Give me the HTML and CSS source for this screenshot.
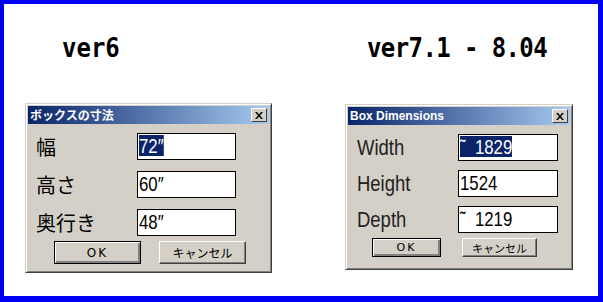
FILE: index.html
```html
<!DOCTYPE html>
<html>
<head>
    <meta charset="UTF-8">
    <title>Box Dimensions</title>
    <link rel="stylesheet" href="styles.css">
</head>
<body>
    <div class="frame">
        <div class="pane pane-old">
            <div class="version">ver6</div>
            <div class="dialog dialog-old">
                <div class="titlebar">
                    <span class="title jp">ボックスの寸法</span>
                    <span class="close-btn">
                        <svg width="8" height="7" viewBox="0 0 8 7"><path d="M0 0h2l2 2.5L6 0h2L5 3.5 8 7H6L4 4.5 2 7H0l3-3.5z" fill="#000"/></svg>
                    </span>
                </div>
                <div class="dialog-body">
                    <label class="field-label jp">幅</label>
                    <div class="field"><span class="narrow selected">72″</span></div>
                    <label class="field-label jp">高さ</label>
                    <div class="field"><span class="narrow">60″</span></div>
                    <label class="field-label jp">奥行き</label>
                    <div class="field"><span class="narrow">48″</span></div>
                    <div class="buttons">
                        <div class="btn btn-default">OK</div>
                        <div class="btn jp">キャンセル</div>
                    </div>
                </div>
            </div>
        </div>

        <div class="pane pane-new">
            <div class="version">ver7.1 - 8.04</div>
            <div class="dialog dialog-new">
                <div class="titlebar">
                    <span class="title">Box Dimensions</span>
                    <span class="close-btn">
                        <svg width="8" height="7" viewBox="0 0 8 7"><path d="M0 0h2l2 2.5L6 0h2L5 3.5 8 7H6L4 4.5 2 7H0l3-3.5z" fill="#000"/></svg>
                    </span>
                </div>
                <div class="dialog-body">
                    <label class="field-label"><span class="narrow">Width</span></label>
                    <div class="field"><span class="narrow selected">˜&nbsp; 1829</span></div>
                    <label class="field-label"><span class="narrow">Height</span></label>
                    <div class="field"><span class="narrow">1524</span></div>
                    <label class="field-label"><span class="narrow">Depth</span></label>
                    <div class="field"><span class="narrow">˜&nbsp; 1219</span></div>
                    <div class="buttons">
                        <div class="btn btn-default">OK</div>
                        <div class="btn jp">キャンセル</div>
                    </div>
                </div>
            </div>
        </div>
    </div>
</body>
</html>
```

FILE: styles.css
```css
body {
    margin: 0;
    background-color: #fff;
    font-family: "Liberation Sans", Arial, sans-serif;
}
.frame {
    box-sizing: border-box;
    width: 603px;
    height: 302px;
    border-style: solid;
    border-color: #0000f4;
    border-width: 4px 5px 6px 4px;
    background-color: #fff;
    padding: 0 0 0 21px;
    display: flex;
    gap: 73px;
}
.pane {
    display: flex;
    flex-direction: column;
}
.version {
    font-family: "DejaVu Sans Mono", "Liberation Mono", monospace;
    font-weight: bold;
    font-size: 24px;
    line-height: 28px;
    color: #000;
    height: 28px;
    margin-top: 30px;
    margin-bottom: 41px;
    transform: scaleY(1.12);
}
.pane-old .version {
    padding-left: 37px;
}
.pane-new .version {
    padding-left: 22px;
    letter-spacing: -0.6px;
}
.jp {
    font-family: "Noto Sans CJK JP", sans-serif;
}
.narrow {
    display: inline-block;
    transform: scaleX(0.8);
    transform-origin: left center;
}

/* window chrome */
.dialog {
    box-sizing: border-box;
    background-color: #d4d0c8;
    border: 1px solid;
    border-color: #d4d0c8 #404040 #404040 #d4d0c8;
    box-shadow: inset 1px 1px 0 #fff, inset -1px -1px 0 #808080;
    padding: 2px;
}
.dialog-old {
    width: 247px;
    height: 170px;
}
.dialog-new {
    width: 228px;
    height: 166px;
    margin-top: 1px;
}
.titlebar {
    height: 18px;
    display: flex;
    align-items: center;
    justify-content: space-between;
    padding: 0 2px;
    background: linear-gradient(to right, #0a246a, #a6caf0);
}
.title {
    color: #fff;
    font-weight: bold;
    font-size: 12px;
    line-height: 18px;
}
.close-btn {
    box-sizing: border-box;
    width: 16px;
    height: 14px;
    background-color: #d4d0c8;
    border: 1px solid;
    border-color: #fff #404040 #404040 #fff;
    display: flex;
    align-items: center;
    justify-content: center;
}

.dialog-body {
    display: grid;
    align-items: center;
    row-gap: 9px;
}
.dialog-old .dialog-body {
    grid-template-columns: 101px 99px;
    padding: 8px 0 0 8px;
}
.dialog-new .dialog-body {
    grid-template-columns: 101px 100px;
    padding: 9px 0 0 9px;
}
.field-label {
    color: #000;
}
.dialog-old .field-label {
    font-size: 20px;
}
.dialog-new .field-label {
    font-size: 22px;
    color: #222;
}
.dialog-new .field-label .narrow {
    transform: scaleX(0.84);
}
.field {
    box-sizing: border-box;
    height: 27px;
    background-color: #fff;
    border: 1px solid #000;
    box-shadow: 0 0 0 1px #d4d0c8;
    padding: 1px 0 0 1px;
    font-size: 21px;
    line-height: 21px;
    color: #000;
    white-space: nowrap;
}
.selected {
    background-color: #0a246a;
    color: #fff;
}
.buttons {
    grid-column: 1 / 3;
    display: flex;
}
.btn {
    box-sizing: border-box;
    flex-shrink: 0;
    display: flex;
    align-items: center;
    justify-content: center;
    background-color: #d4d0c8;
    border: 1px solid;
    border-color: #fff #404040 #404040 #fff;
    box-shadow: inset -1px -1px 0 #808080;
    font-size: 12px;
    color: #000;
}
.btn-default {
    border: 1px solid #000;
    box-shadow: inset 1px 1px 0 #fff, inset -2px -2px 0 #808080;
    letter-spacing: 2px;
    font-family: "DejaVu Sans", sans-serif;
}
.dialog-old .buttons {
    padding-left: 18px;
    margin-top: -5px;
}
.dialog-old .btn {
    width: 87px;
    height: 23px;
}
.dialog-old .btn + .btn {
    margin-left: 18px;
}
.dialog-new .buttons {
    padding-left: 15px;
    margin-top: -4px;
}
.dialog-new .btn {
    height: 19px;
    width: 69px;
    font-size: 11px;
}
.dialog-new .btn + .btn {
    width: 75px;
    margin-left: 21px;
}
```
